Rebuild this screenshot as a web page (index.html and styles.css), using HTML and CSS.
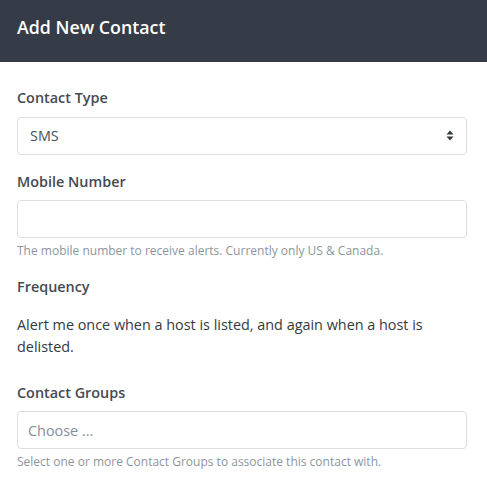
FILE: index.html
```html
<!DOCTYPE html>
<html>
<head>
<meta charset="utf-8">
<link rel="stylesheet" href="styles.css">
</head>
<body>
<div class="modal">
  <div class="modal-header"><h1 class="title">Add New Contact</h1></div>
  <div class="modal-body">
    <div class="group">
      <label class="label">Contact Type</label>
      <div class="control select">
        <span>SMS</span>
        <svg class="caret" width="8" height="11" viewBox="0 0 8 11"><path d="M4 0.5 L7.5 4.5 H0.5 Z M4 10.5 L7.5 6.5 H0.5 Z" fill="#343a40"/></svg>
      </div>
    </div>
    <div class="group">
      <label class="label">Mobile Number</label>
      <div class="control"></div>
      <div class="help">The mobile number to receive alerts. Currently only US &amp; Canada.</div>
    </div>
    <div class="group">
      <label class="label">Frequency</label>
      <p class="text">Alert me once when a host is listed, and again when a host is delisted.</p>
    </div>
    <div class="group">
      <label class="label">Contact Groups</label>
      <div class="control placeholder">Choose ...</div>
      <div class="help">Select one or more Contact Groups to associate this contact with.</div>
    </div>
  </div>
</div>
</body>
</html>
```
FILE: styles.css
```css
html, body { margin: 0; padding: 0; background: #fff; }
body { font-family: "Open Sans", "Liberation Sans", sans-serif; color: #343a40; }
.modal { width: 487px; }
.modal-header { background: #353b47; height: 62px; padding: 0 17px; box-sizing: border-box; display: flex; align-items: center; }
.title { margin: 0 0 7px; color: #fff; font-size: 17.8px; font-weight: 600; line-height: 1.2; }
.modal-body { padding: 25px 20px 0 17px; display: flex; flex-direction: column; }
.group { display: flex; flex-direction: column; margin-bottom: 16px; }
.label { font-size: 14.4px; font-weight: 600; line-height: 21.6px; color: #454a51; margin-bottom: 8px; }
.control { height: 38px; box-sizing: border-box; border: 1px solid #dadee3; border-radius: 4px; display: flex; align-items: center; padding: 0 10px; font-size: 14.4px; color: #495057; }
.select { justify-content: space-between; padding: 0 12px 0 12px; }
.caret { display: block; }
.placeholder { color: #868e96; }
.help { font-size: 12px; line-height: 18px; margin-top: 4px; color: #8c959e; }
.text { margin: 8px 0 8px; font-size: 14.4px; line-height: 22px; color: #343a40; }
```
